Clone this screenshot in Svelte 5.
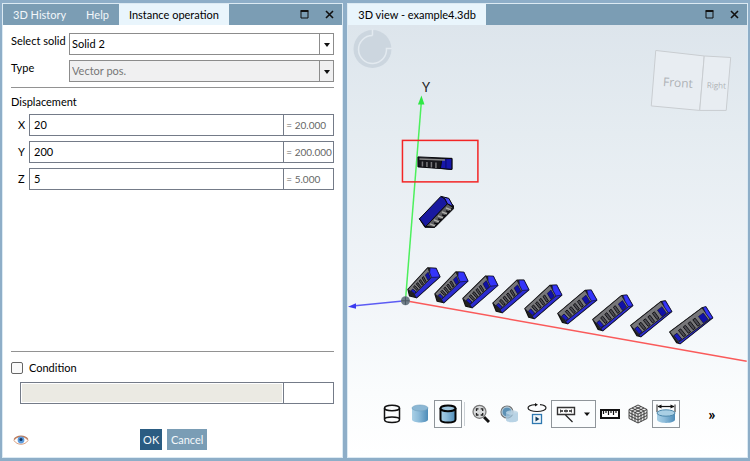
<script>
  let condition = $state(false);
  let solid = $state('Solid 2');
  let axes = $state([
    { name: 'X', value: '20', result: '20.000' },
    { name: 'Y', value: '200', result: '200.000' },
    { name: 'Z', value: '5', result: '5.000' }
  ]);

  // left, top, right, bottom of each instance in the row
  const boxes = [
    [408, 268, 440, 298], [435, 272, 468, 303], [463, 276, 498, 308],
    [493, 280, 529, 313], [525, 285, 562, 319], [558, 290, 597, 324],
    [593, 295, 633, 331], [631, 301, 672, 337], [670, 307, 713, 344]
  ];

  const near = { a: [0, 0.72], b: [0.62, 0], c: [0.88, 0.02], d: [1, 0.3], e: [0.27, 1], f: [0.05, 0.94], g: [0.74, 0.32], h: [0.2, 0.88] };
  const far = { a: [0, 0.68], b: [0.75, 0.03], c: [0.84, 0], d: [1, 0.3], e: [0.24, 1], f: [0.16, 0.97], g: [0.94, 0.33], h: [0.2, 0.96] };

  const mix = (p, q, t) => [p[0] + (q[0] - p[0]) * t, p[1] + (q[1] - p[1]) * t];
  const pts = (list) => list.map((p) => p.map((n) => n.toFixed(1)).join(',')).join(' ');

  const chips = boxes.map(([x0, y0, x1, y1], i) => {
    const k = {};
    for (const key of Object.keys(near)) {
      const [u, v] = mix(near[key], far[key], i / 8);
      k[key] = [x0 + u * (x1 - x0), y0 + v * (y1 - y0)];
    }
    const quad = (s, e, m, n) => {
      const top = (t) => mix(k.a, k.b, t);
      const low = (t) => mix(k.h, k.g, t);
      return pts([mix(top(s), low(s), m), mix(top(e), low(e), m), mix(top(e), low(e), n), mix(top(s), low(s), n)]);
    };
    return {
      outline: pts([k.a, k.b, k.c, k.d, k.e, k.f]),
      face: pts([k.a, k.b, k.g, k.h]),
      end: pts([mix(k.b, k.c, 0.3), k.c, k.d, k.g, mix(k.g, k.b, 0.5)]),
      side: pts([k.g, k.d, k.e, k.h]),
      foot: quad(0.02, 0.12, 0.4, 0.95),
      slots: [0.19, 0.34, 0.49, 0.64].map((s) => quad(s, s + 0.07, 0.3, 0.9)),
      cap: quad(0.8, 0.95, 0.35, 0.95)
    };
  });
</script>

{#snippet windowButtons()}
  <div class="window-buttons">
    <button aria-label="Maximize"><svg width="9" height="9" viewBox="0 0 9 9"><path d="M1 1.5h7v6.500H1z" fill="none" stroke="#111" /><path d="M.5 1h8" stroke="#111" stroke-width="2" /></svg></button>
    <button aria-label="Close"><svg width="9" height="9" viewBox="0 0 9 9"><path d="M1 1l7 7M8 1L1 8" stroke="#111" stroke-width="1.600" /></svg></button>
  </div>
{/snippet}

<div class="workspace">
  <section class="panel">
    <header class="bar">
      <nav class="tabs">
        <button class="tab">3D History</button>
        <button class="tab">Help</button>
        <button class="tab active">Instance operation</button>
      </nav>
      {@render windowButtons()}
    </header>
    <form class="form" onsubmit={(e) => e.preventDefault()}>
      <div class="line">
        <label for="solid">Select solid</label>
        <div class="combo">
          <select id="solid" bind:value={solid}><option>Solid 2</option></select>
          <span class="arrow"></span>
        </div>
      </div>
      <div class="line">
        <label for="type">Type</label>
        <div class="combo off">
          <select id="type" disabled><option>Vector pos.</option></select>
          <span class="arrow"></span>
        </div>
      </div>
      <hr />
      <h2>Displacement</h2>
      <div class="axes">
        {#each axes as axis}
          <div class="axis">
            <label for={'axis' + axis.name}>{axis.name}</label>
            <div class="field">
              <input id={'axis' + axis.name} type="text" bind:value={axis.value} />
              <output for={'axis' + axis.name}>= {axis.result}</output>
            </div>
          </div>
        {/each}
      </div>
      <div class="bottom">
        <hr />
        <label class="check"><input type="checkbox" bind:checked={condition} />Condition</label>
        <div class="field formula">
          <input type="text" aria-label="Condition formula" disabled={!condition} />
          <output></output>
        </div>
        <div class="actions">
          <button type="button" class="eye" aria-label="Preview">
            <svg width="16" height="12" viewBox="0 0 16 12">
              <path d="M1 6.500C3 2 12 1 15 6.500C12 11.500 4 11.500 1 6.500z" fill="#fff" stroke="#d9a184" />
              <path d="M1 5.500C4 1 12 1 15 5.500" fill="none" stroke="#b9795a" stroke-width="1.200" />
              <circle cx="8" cy="6" r="3.400" fill="#5b9bdc" />
              <circle cx="8" cy="5.500" r="1.500" fill="#14335e" />
            </svg>
          </button>
          <button class="ok">OK</button>
          <button type="button" class="cancel">Cancel</button>
        </div>
      </div>
    </form>
  </section>

  <section class="panel view">
    <header class="bar">
      <nav class="tabs"><button class="tab active">3D view - example4.3db</button></nav>
      {@render windowButtons()}
    </header>
    <div class="stage">
      <svg class="scene" viewBox="348 25 399 433" preserveAspectRatio="xMinYMin slice">
        <g>
          <circle cx="372.500" cy="49" r="19" fill="#ccd6df" />
          <path d="M372.500 35.500A14 14 0 1 0 386.500 48.500H392" fill="none" stroke="#e3eaf0" stroke-width="1.500" />
          <path d="M372.500 29.500V35.500" stroke="#e3eaf0" stroke-width="1.500" />
        </g>
        <g fill="#e8edf2" stroke="#c9cdd1">
          <path d="M656 50.500L704.500 56L700 110.500L651.500 106z" />
          <path d="M704.500 56L731 57.500L726.500 110.500L700 110.500z" />
        </g>
        <g class="cube">
          <text x="663" y="86" transform="rotate(4 663 86)" font-size="12">Front</text>
          <text x="707" y="88" transform="rotate(2 707 88)" font-size="8">Right</text>
        </g>
        <path d="M405.500 301L421.300 103" stroke="#4cf05c" stroke-width="1.500" />
        <path d="M421.500 95.500L424.500 104.500H418z" fill="#2fe845" />
        <path d="M405.500 301L355 306" stroke="#5c5cf4" stroke-width="1.500" />
        <path d="M348 307L356 303.500V309z" fill="#3b3bf0" />
        <path d="M405.500 301L747 361.500" stroke="#fa5a5a" stroke-width="1.500" />
        <circle cx="405.500" cy="301" r="4.500" fill="#6f7d88" />
        <path d="M401.500 301h8M405.500 297v8" stroke="#4a5862" />
        <text class="axis-name" x="422" y="92" font-size="13">Y</text>

        {#each chips as chip}
          <g stroke-linejoin="round">
            <polygon points={chip.outline} fill="#222" stroke="#111" stroke-width="1.200" />
            <polygon points={chip.side} fill="#2c2cd0" stroke="#101030" stroke-width=".5" />
            <polygon points={chip.face} fill="#77777a" stroke="#18181c" stroke-width=".8" />
            {#each chip.slots as slot}
              <polygon points={slot} fill="#4c4c54" stroke="#0c0c0e" stroke-width=".9" />
            {/each}
            <polygon points={chip.foot} fill="#1a1ac0" stroke="#0c0c30" stroke-width=".8" />
            <polygon points={chip.end} fill="#3434fa" stroke="#101040" stroke-width=".5" />
            <polygon points={chip.cap} fill="#1010a8" stroke="#0c0c30" stroke-width=".6" />
          </g>
        {/each}

        <g stroke="#08080c" stroke-linejoin="round">
          <path d="M419.500 219L425 227.500L435 227.500L453.500 209V206L447 198z" fill="#222" />
          <path d="M419.500 219L441 196.500L445 199L447.500 204L425.500 227z" fill="#1919a0" />
          <path d="M441 196.500L449 198.500L453.500 207L447.500 204L445 199z" fill="#4848f4" />
          <path d="M447.500 204L453 207.500L434 227.500L426 226.500z" fill="#5d5d60" />
          <path d="M446 208l5 2M442 212l5 2M438 216l5 2M434 220l5 2M430 224l5 2" stroke="#b0b0ac" stroke-width="1.500" />
          <path d="M446 211l3 1M442 215l3 1M438 219l3 1M434 223l3 1" stroke-width="1.500" />
        </g>
        <g stroke="#08080c" stroke-linejoin="round">
          <path d="M418 157L452 158.500V169.500L418 167z" fill="#17171c" />
          <path d="M442 159L452 158.500V169.500L440.500 168.500z" fill="#1616aa" />
          <path d="M446 159.500V168.500" stroke="#0b0b66" />
          <path d="M419.500 159L445 160" stroke="#888" stroke-width="1.500" />
          <path d="M422.500 161.500v5M427 162v5M431.500 162v5.500M436 162.500v5.500" stroke="#77777a" stroke-width="1.500" />
        </g>
        <rect x="402.500" y="140.500" width="75.500" height="41.500" fill="none" stroke="#f32525" stroke-width="1.500" />
      </svg>

      <div class="toolbar">
        <button aria-label="Wireframe"><svg width="18" height="20" viewBox="0 0 18 20"><g fill="none" stroke="#111" stroke-width="1.500"><ellipse cx="9" cy="4" rx="7.500" ry="2.800" /><path d="M1.500 4V15.500c0 4 15 4 15 0V4M1.500 15.500c0-3.500 15-3.500 15 0" /></g></svg></button>
        <button aria-label="Shaded"><svg width="18" height="20" viewBox="0 0 18 20"><path d="M1 4V15.500c0 4 16 4 16 0V4z" fill="url(#steel)" /><ellipse cx="9" cy="4" rx="8" ry="3" fill="#8bb7d4" stroke="#6f9fbe" stroke-width=".6" /></svg></button>
        <button class="on" aria-label="Shaded with edges"><svg width="18" height="20" viewBox="0 0 18 20"><g stroke="#050505" stroke-width="2"><path d="M1.500 4V15.500c0 4 15 4 15 0V4" fill="url(#steel)" /><ellipse cx="9" cy="4.300" rx="7.500" ry="2.900" fill="#9cc4dd" /></g></svg></button>
        <span class="rule"></span>
        <button aria-label="Zoom to fit"><svg width="18" height="20" viewBox="0 0 18 20"><path d="M12 13l5 5" stroke="#111" stroke-width="3" /><circle cx="7.500" cy="7.800" r="6.500" fill="#d7d9da" stroke="#777" stroke-width="1.200" /><path d="M4.500 7V4.800h2M8.700 4.800h2V7M10.700 9v2h-2M6.500 11h-2V9" fill="none" stroke="#222" stroke-width="1.300" /></svg></button>
        <button aria-label="Transparency"><svg width="20" height="20" viewBox="0 0 20 20"><circle cx="8" cy="8" r="6" fill="#5d91b5" stroke="#777" stroke-width="1.200" /><circle cx="8" cy="8" r="5" fill="none" stroke="#c6d4dd" /><path d="M7 8.500V16c0 3 12 3 12 0V8.500z" fill="#a2c4dc" fill-opacity=".75" /><ellipse cx="13" cy="8.500" rx="6" ry="2.200" fill="#bdd5e5" fill-opacity=".8" /></svg></button>
        <button aria-label="Animate rotation"><svg width="20" height="22" viewBox="0 0 20 22"><path d="M8.500 1.600C3.500 1.900 1 3.300 1 5c0 2 4 3.500 9 3.500S19 7 19 5c0-1.700-2.500-3.100-6-3.400" fill="none" stroke="#222" stroke-width="1.200" /><path d="M8 0v3.400l3-1.700z" fill="#111" /><rect x="5.500" y="11.500" width="9" height="9" fill="#f2f8fc" stroke="#2e78b0" stroke-width="1.300" /><path d="M8.500 13.500v5l4-2.500z" fill="#123b5c" /></svg></button>
        <button class="on wide" aria-label="Labels">
          <svg width="20" height="20" viewBox="0 0 20 20"><path d="M1.500 3.500h17v7h-17z" fill="#fff" stroke="#333" stroke-width="1.400" /><path d="M4 7h3M8 7h4M13 7h3" stroke="#222" stroke-width="1.500" /><path d="M4.500 5.500v3M10 5.500v3M15.500 5.500v3" stroke="#444" /><path d="M9.500 11l7 7" stroke="#222" stroke-width="1.300" /></svg>
          <svg width="8" height="5" viewBox="0 0 8 5"><path d="M1 .5h6L4 4z" fill="#111" /></svg>
        </button>
        <button aria-label="Measure"><svg width="20" height="10" viewBox="0 0 20 10"><path d="M1 1h18v8H1z" fill="#fff" stroke="#111" stroke-width="2" /><path d="M3.500 1v4M6 1v3M8.500 1v5M11 1v3M13.500 1v5M16 1v3" stroke="#111" stroke-width="1.200" /></svg></button>
        <button aria-label="Mesh"><svg width="20" height="20" viewBox="0 0 20 20"><path d="M10 1l9 4.500v9L10 19l-9-4.500v-9z" fill="#e8e8e8" /><path d="M10 1l9 4.500v9L10 19l-9-4.500v-9zM1 5.500l9 4.500 9-4.500M10 10v9M4 7v9M7 8.500v9M13 8.500v9M16 7v9M1 8.500l9 4.500 9-4.500M1 11.500l9 4.500 9-4.500M4 4l9 4.500M7 2.500l9 4.500M16 4L7 8.500M13 2.500L4 7" fill="none" stroke="#333" stroke-width=".9" /></svg></button>
        <button class="on" aria-label="Dimensions"><svg width="20" height="20" viewBox="0 0 20 20"><path d="M1 .5V8M19 .5V8" stroke="#222" /><path d="M2 2.500h16" stroke="#111" stroke-width="1.200" /><path d="M1.500 2.500l4-2v4zM18.500 2.500l-4-2v4z" fill="#111" /><path d="M1 9V15.500c0 4.500 18 4.500 18 0V9z" fill="url(#steel)" /><ellipse cx="10" cy="9" rx="9" ry="3.200" fill="#a9cfe4" stroke="#4d88ac" /></svg></button>
        <button class="more" aria-label="More tools">»</button>
      </div>
      <svg class="defs" width="0" height="0" aria-hidden="true"><defs><linearGradient id="steel"><stop offset="0" stop-color="#a9d0e6" /><stop offset=".4" stop-color="#8dbcda" /><stop offset="1" stop-color="#4d8cb8" /></linearGradient></defs></svg>
    </div>
  </section>
</div>

<style>
  :global(body) { background: #8eaec8; }
  .workspace {
    box-sizing: border-box;
    height: 100vh;
    display: grid;
    grid-template-columns: 46fr 54fr;
    gap: 4px;
    padding: 3px 2px;
    font: 11px/16px Lato, "Noto Sans", sans-serif;
    color: #000;
  }
  button, input, select { font: inherit; color: inherit; margin: 0; }
  button { border: 0; padding: 0; background: none; }
  .panel {
    display: flex;
    flex-direction: column;
    min-width: 0;
    border: 1px solid #dceaf3;
    background: #fff;
  }
  .bar {
    display: flex;
    justify-content: space-between;
    height: 21px;
    background: #7b9db4;
  }
  .tabs { display: flex; }
  .tab { padding: 0 10px; color: #f2f7fa; white-space: nowrap; }
  .active { background: #e9f5fc; color: #000; }
  .window-buttons { display: flex; gap: 16px; padding-right: 8px; }
  .window-buttons button { display: flex; align-items: center; }
  .form {
    flex: 1;
    display: flex;
    flex-direction: column;
    padding: 8px 8px 7px;
  }
  .line { display: flex; margin-bottom: 5px; }
  .line label { width: 58px; white-space: nowrap; }
  .combo { position: relative; flex: 1; display: flex; }
  .combo select {
    flex: 1;
    height: 22px;
    padding: 0 2px;
    border: 1px solid #8c8c8c;
    border-radius: 0;
    background: #fff;
    appearance: none;
  }
  .combo.off select { background: #f0f0f1; color: #777; opacity: 1; }
  .arrow {
    position: absolute;
    inset: 1px 1px 1px auto;
    width: 13px;
    border-left: 1px solid #8c8c8c;
    pointer-events: none;
  }
  .arrow::after {
    content: "";
    position: absolute;
    top: 9px;
    left: 4px;
    border: 3px solid transparent;
    border-top: 4px solid #111;
    border-bottom: 0;
  }
  hr { width: 100%; margin: 0; border: 0; border-top: 1px solid #929292; }
  h2 { margin: 6px 0 4px; font: inherit; }
  .axes { display: flex; flex-direction: column; gap: 5px; }
  .axis { display: flex; align-items: center; }
  .axis label { width: 11px; padding-left: 7px; }
  .field {
    flex: 1;
    box-sizing: border-box;
    display: flex;
    height: 22px;
    border: 1px solid #747b88;
  }
  .field input {
    flex: 1;
    min-width: 0;
    border: 0;
    padding: 0 4px;
    background: #fff;
    outline: 0;
  }
  .field output {
    box-sizing: border-box;
    width: 50px;
    padding: 2px;
    border-left: 1px solid #747b88;
    color: #666;
    font-size: 10px;
    white-space: nowrap;
  }
  .bottom { display: flex; flex-direction: column; margin-top: auto; }
  .check { display: flex; align-items: center; gap: 6px; margin: 8px 0 6px; }
  .check input {
    width: 12px;
    height: 12px;
    appearance: none;
    border: 1px solid #666;
    border-radius: 2px;
    background: #fafafa;
  }
  .check input:checked { background: #2b5f85; }
  .formula { flex: none; margin-left: 9px; }
  .formula input:disabled { background: #ebeae3; border: 1px solid #fff; }
  .actions {
    display: grid;
    grid-template-columns: 1fr auto auto 1fr;
    gap: 5px;
    margin-top: 25px;
    padding-left: 2px;
  }
  .actions::after { content: ""; }
  .eye { justify-self: start; display: flex; align-items: center; }
  .ok, .cancel { height: 21px; color: #f4f8fb; }
  .ok { width: 22px; background: #2a5c82; }
  .cancel { width: 40px; background: #7a9db5; }
  .stage {
    position: relative;
    flex: 1;
    min-height: 0;
    background: linear-gradient(#dde5ec, #e5ecf1 25%, #f0f4f8 60%, #fafcfd 85%, #fff);
  }
  .scene { position: absolute; inset: 0; width: 100%; height: 100%; }
  .cube text { fill: #aeb2b6; font-family: "Open Sans", sans-serif; }
  .axis-name { fill: #222; }
  .defs { position: absolute; }
  .toolbar {
    position: absolute;
    left: 30px;
    right: 27px;
    bottom: 29px;
    display: flex;
    align-items: center;
  }
  .toolbar button {
    box-sizing: border-box;
    display: flex;
    align-items: center;
    justify-content: center;
    width: 28px;
    height: 28px;
  }
  .toolbar .on { border: 1px solid #8f959a; background: #fbfdfe; }
  .toolbar .wide { width: 45px; gap: 7px; }
  .toolbar .rule { width: 1px; height: 24px; margin: 0 2px; background: #c9cfd4; }
  .toolbar .more { width: 16px; margin-left: auto; font-size: 16px; font-weight: 700; }
</style>
